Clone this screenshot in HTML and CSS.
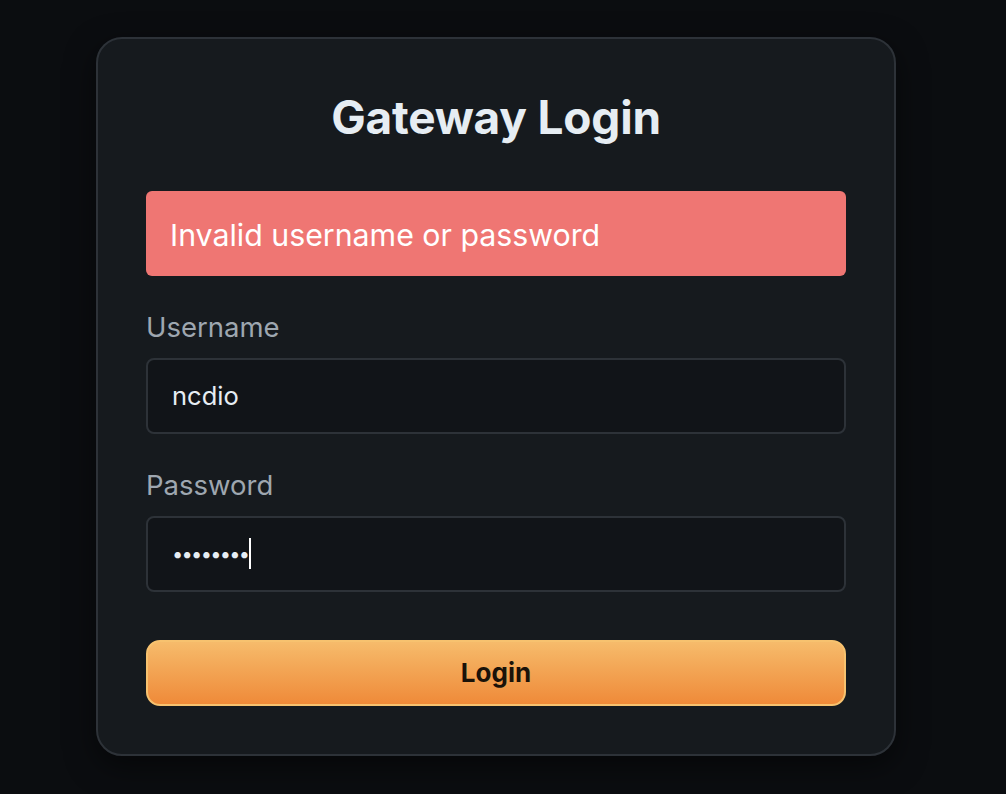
FILE: index.html
```html
<!DOCTYPE html>
<html>
<head>
<meta charset="utf-8">
<link rel="stylesheet" href="styles.css">
</head>
<body>
<div class="page">
  <form class="card">
    <h1 class="title">Gateway Login</h1>
    <div class="error">Invalid username or password</div>
    <div class="field">
      <label class="label">Username</label>
      <div class="input"><span class="value">ncdio</span></div>
    </div>
    <div class="field">
      <label class="label">Password</label>
      <div class="input"><span class="dots">••••••••</span><span class="caret"></span></div>
    </div>
    <button type="button" class="btn">Login</button>
  </form>
</div>
</body>
</html>
```
FILE: styles.css
```css
html, body {
  margin: 0;
  padding: 0;
  background: #0b0d10;
  height: 100%;
}
body {
  font-family: Inter, "Noto Sans", "Liberation Sans", sans-serif;
  color: #e6edf3;
}
.page {
  padding: 37px 0 0 96px;
}
.card {
  box-sizing: border-box;
  width: 800px;
  height: 719px;
  background: #161a1e;
  border: 2px solid #2d3238;
  border-radius: 26px;
  padding: 48px 48px;
  display: flex;
  flex-direction: column;
  box-shadow: 0 10px 30px rgba(0,0,0,0.5);
}
.title {
  margin: 0;
  text-align: center;
  font-size: 46px;
  font-weight: 700;
  line-height: 60px;
  color: #e6edf3;
  letter-spacing: -0.2px;
}
.error {
  margin-top: 44px;
  height: 86px;
  box-sizing: border-box;
  background: #ef7673;
  border-radius: 6px;
  padding: 4px 24px 0;
  display: flex;
  align-items: center;
  font-size: 30.3px;
  color: #ffffff;
}
.field {
  display: flex;
  flex-direction: column;
}
.label {
  margin-top: 34px;
  font-size: 27.5px;
  line-height: 34px;
  color: #9ea7b0;
  margin-bottom: 14px;
}
.input {
  box-sizing: border-box;
  height: 76px;
  background: #111418;
  border: 2px solid #2d3238;
  border-radius: 8px;
  padding: 0 24px;
  display: flex;
  align-items: center;
  font-size: 25.5px;
  color: #e6edf3;
}
.dots {
  font-size: 20px;
  letter-spacing: -1.7px;
  color: #e6edf3;
}
.caret {
  display: inline-block;
  width: 2px;
  height: 31px;
  background: #ffffff;
  margin-left: 1px;
}
.btn {
  margin-top: 48px;
  height: 67px;
  box-sizing: border-box;
  border: 2px solid #f7c26f;
  border-radius: 14px;
  background: linear-gradient(to bottom, #f6bb6b, #ef8a39);
  font-family: Inter, "Noto Sans", "Liberation Sans", sans-serif;
  font-size: 26px;
  font-weight: 700;
  color: #1a1209;
  cursor: pointer;
}
```
